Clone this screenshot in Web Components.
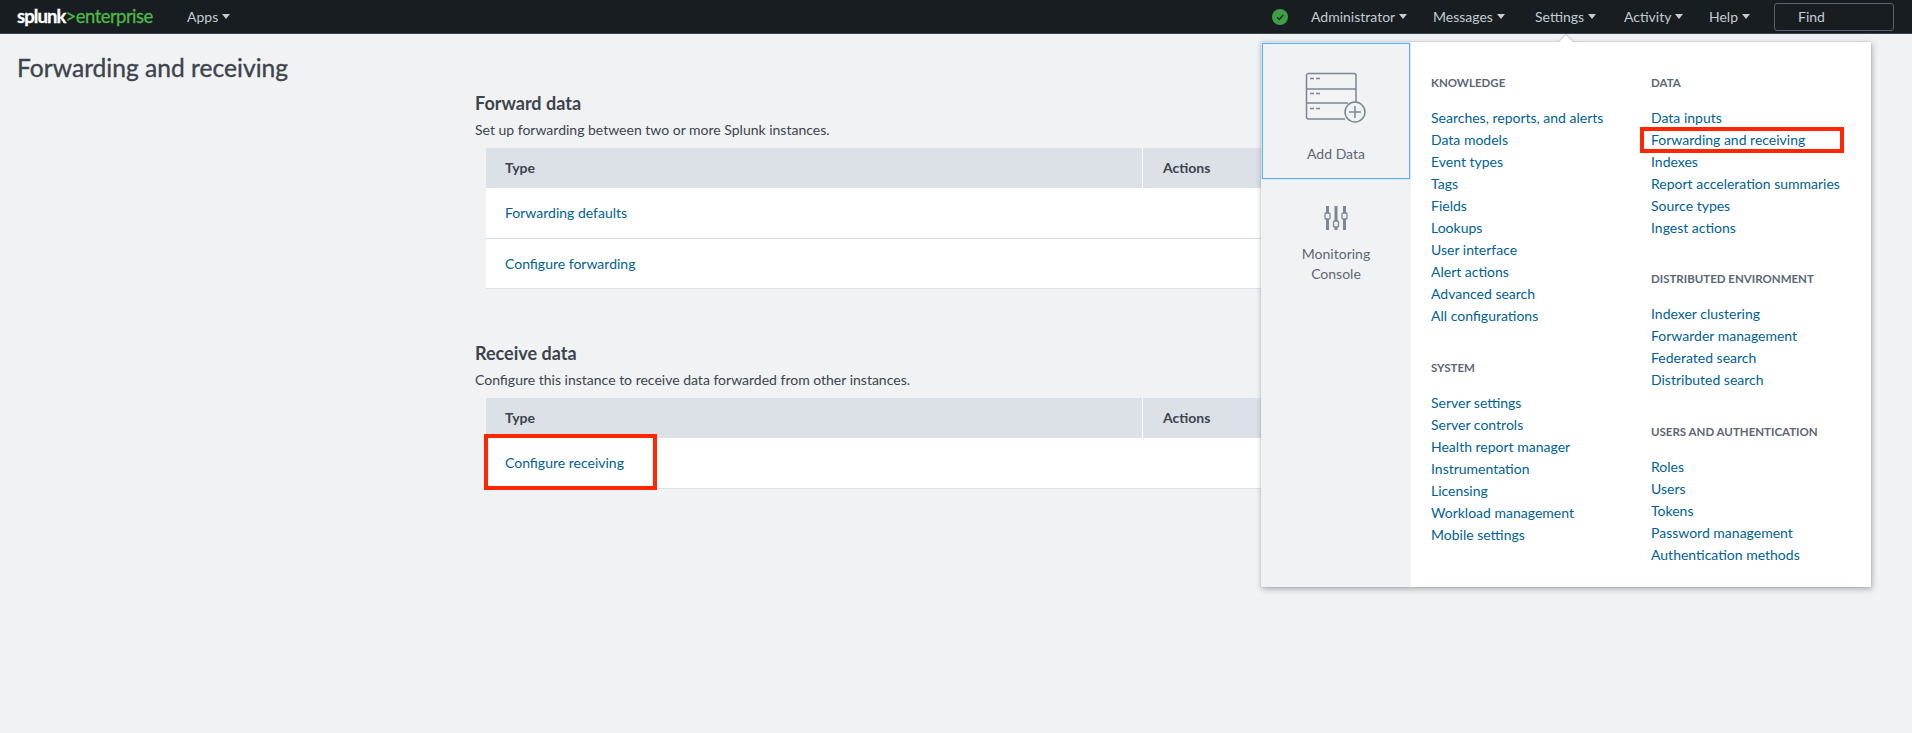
<!DOCTYPE html>
<html><head><meta charset="utf-8"><title>Forwarding and receiving</title>
<style>
html,body{margin:0;padding:0;background:#f1f2f4;height:100%;overflow:hidden}
body{font-family:Lato,"Liberation Sans",sans-serif;color:#3c444d}
</style></head><body>
<splunk-nav>
  <nav-item slot="left" w="60">Apps</nav-item>
  <nav-item w="122">Administrator</nav-item>
  <nav-item w="102">Messages</nav-item>
  <nav-item w="89">Settings</nav-item>
  <nav-item w="85">Activity</nav-item>
  <nav-item w="65">Help</nav-item>
</splunk-nav>
<page-main>
  <span slot="title">Forwarding and receiving</span>
  <data-section heading="Forward data" desc="Set up forwarding between two or more Splunk instances.">
    <table-row>Forwarding defaults</table-row>
    <table-row>Configure forwarding</table-row>
  </data-section>
  <data-section heading="Receive data" desc="Configure this instance to receive data forwarded from other instances.">
    <table-row mark>Configure receiving</table-row>
  </data-section>
</page-main>
<settings-menu>
  <menu-col>
    <menu-group title="KNOWLEDGE">
      <menu-link>Searches, reports, and alerts</menu-link><menu-link>Data models</menu-link><menu-link>Event types</menu-link><menu-link>Tags</menu-link><menu-link>Fields</menu-link><menu-link>Lookups</menu-link><menu-link>User interface</menu-link><menu-link>Alert actions</menu-link><menu-link>Advanced search</menu-link><menu-link>All configurations</menu-link>
    </menu-group>
    <menu-group title="SYSTEM" gap="30">
      <menu-link>Server settings</menu-link><menu-link>Server controls</menu-link><menu-link>Health report manager</menu-link><menu-link>Instrumentation</menu-link><menu-link>Licensing</menu-link><menu-link>Workload management</menu-link><menu-link>Mobile settings</menu-link>
    </menu-group>
  </menu-col>
  <menu-col>
    <menu-group title="DATA">
      <menu-link>Data inputs</menu-link><menu-link mark>Forwarding and receiving</menu-link><menu-link>Indexes</menu-link><menu-link>Report acceleration summaries</menu-link><menu-link>Source types</menu-link><menu-link>Ingest actions</menu-link>
    </menu-group>
    <menu-group title="DISTRIBUTED ENVIRONMENT" gap="29">
      <menu-link>Indexer clustering</menu-link><menu-link>Forwarder management</menu-link><menu-link>Federated search</menu-link><menu-link>Distributed search</menu-link>
    </menu-group>
    <menu-group title="USERS AND AUTHENTICATION" gap="30">
      <menu-link>Roles</menu-link><menu-link>Users</menu-link><menu-link>Tokens</menu-link><menu-link>Password management</menu-link><menu-link>Authentication methods</menu-link>
    </menu-group>
  </menu-col>
</settings-menu>
<script>
function def(name, css, html, init){
  customElements.define(name, class extends HTMLElement{
    constructor(){super();const s=this.attachShadow({mode:'open'});s.innerHTML='<style>'+css+'</style>'+html;}
    connectedCallback(){ if(init) init(this,this.shadowRoot); }
  });
}
const F='font-family:Lato,"Liberation Sans",sans-serif;';
def('splunk-nav',`:host{display:flex;align-items:center;height:33px;background:#171d21;border-bottom:1px solid #3c444d;${F}}
 .logo{margin-left:17px;width:136px;white-space:nowrap;font-size:18.5px;line-height:33px;letter-spacing:-.55px;color:#4fb848;font-weight:400;-webkit-text-stroke:.3px #4fb848}
 .logo b{color:#fff;font-weight:700;letter-spacing:-.9px;-webkit-text-stroke:.3px #fff}
 .left{margin-left:34px;display:flex}
 .right{margin-left:auto;display:flex;align-items:center;padding-right:18px}
 .status{width:16px;height:16px;margin-right:23px;display:block}
 .find{box-sizing:border-box;width:120px;height:28px;border:1px solid #57626d;border-radius:3px;color:#c3cbd4;font-size:14px;line-height:26px;padding-left:23px}`,
 `<span class="logo"><b>splunk</b>&gt;enterprise</span><div class="left"><slot name="left"></slot></div>
 <div class="right"><svg class="status" viewBox="0 0 16 16"><circle cx="8" cy="8" r="8" fill="#3f9e43"/><path d="M5 8.2l2.2 2.2L11.2 6" fill="none" stroke="#12361a" stroke-width="1.4"/></svg><slot></slot><div class="find">Find</div></div>`);
def('nav-item',`:host{display:flex;align-items:center;gap:4px;color:#c3cbd4;font-size:14px;line-height:33px;white-space:nowrap}
 i{display:block;width:0;height:0;border:4px solid transparent;border-top:5px solid #c3cbd4;border-bottom:0}`,
 `<slot></slot><i></i>`,(h)=>{h.style.width=h.getAttribute('w')+'px'});
def('page-main',`:host{display:grid;grid-template-columns:458px 1fr;padding-left:17px;${F}}
 h1{margin:19px 0 0;font-size:24.6px;line-height:30px;font-weight:400;color:#3c444d;-webkit-text-stroke:.35px #3c444d}
 .s{padding-top:58px;display:flex;flex-direction:column;gap:53px}`,
 `<h1><slot name="title"></slot></h1><div class="s"><slot></slot></div>`);
def('data-section',`:host{display:block;${F}}
 h2{margin:0 0 7px;font-size:18px;line-height:22px;font-weight:700;color:#3c444d}
 p{margin:0 0 9px;font-size:14px;line-height:18px;color:#3c444d}
 .t{margin-left:11px;width:900px}
 .h{display:grid;grid-template-columns:656px 1fr;height:40px;background:#dce0e7;font-size:14px;font-weight:700;line-height:40px;color:#3c444d}
 .h span{padding-left:19px}.h span+span{border-left:1px solid #fff;padding-left:20px}`,
 `<h2></h2><p></p><div class="t"><div class="h"><span>Type</span><span>Actions</span></div><slot></slot></div>`,
 (h,s)=>{s.querySelector('h2').textContent=h.getAttribute('heading');s.querySelector('p').textContent=h.getAttribute('desc');});
def('table-row',`:host{display:block;position:relative;box-sizing:border-box;height:50.5px;background:#fff;border-bottom:1px solid #dce0e7;color:#006297;font-size:14px;line-height:49px;padding-left:19px}
 .m{display:none;position:absolute;left:-2px;top:-4px;width:173px;height:56px;box-sizing:border-box;border:4px solid #ff2600}
 :host([mark]) .m{display:block}`,`<slot></slot><div class="m"></div>`);
def('settings-menu',`:host{position:absolute;left:1261px;top:42px;width:610px;height:545px;box-sizing:border-box;display:flex;background:#fff;box-shadow:0 0 1px #8f99a3,1px 2px 6px rgba(60,68,77,.4);${F}}
 .n{position:absolute;left:300px;top:-5px;width:10px;height:10px;background:#fff;transform:rotate(45deg);box-shadow:-1px -1px 1px rgba(60,68,77,.2)}
 .side{width:150px;background:#f1f2f4;flex:none;color:#5c6773;font-size:14px;text-align:center;line-height:20px;position:relative}
 .a{box-sizing:border-box;height:136px;margin:1px 1px 0 1px;border:1px solid #5cb0f0;box-shadow:0 0 1px #5cb0f0;padding-top:28px}
 .a svg{display:block;margin:0 auto 20px}
 .b{padding-top:27px}.b svg{display:block;margin:0 auto 14px}
 .c{display:flex;padding-top:30px;padding-left:20px}`,
 `<div class="n"></div><div class="side">
 <div class="a"><svg width="62" height="52" viewBox="0 0 62 52" fill="none" stroke="#7c8791" stroke-width="1.5"><path d="M3 1.500H49a2 2 0 0 1 2 2V30M1.500 17H51M1.500 31H43M1.500 3.500a2 2 0 0 1 2-2M1.500 3V45a2 2 0 0 0 2 2H40"/><path d="M5 6.500h4M11 6.500h4M5 21.500h4M11 21.500h4M5 36.500h4M11 36.500h4" stroke-width="1.300"/><circle cx="50" cy="40" r="10"/><path d="M50 34v12M44 40h12"/></svg>Add Data</div>
 <div class="b"><svg width="24" height="24" viewBox="0 0 24 24"><g fill="#7c8791"><rect x="2" width="3" height="24"/><rect x="10.500" width="3" height="24"/><rect x="19" width="3" height="24"/></g><g fill="#f1f2f4" stroke="#7c8791" stroke-width="1.300"><rect x="1" y="7" width="5" height="6" rx="1"/><rect x="9.500" y="15" width="5" height="6" rx="1"/><rect x="18" y="7" width="5" height="6" rx="1"/></g></svg>Monitoring<br>Console</div>
 </div><div class="c"><slot></slot></div>`);
def('menu-col',`:host{display:block;width:220px}`,`<slot></slot>`);
def('menu-group',`:host{display:block}
 h3{margin:0 0 13px;font-size:11.500px;line-height:22px;font-weight:700;color:#5c6773;white-space:nowrap}`,
 `<h3></h3><slot></slot>`,(h,s)=>{s.querySelector('h3').textContent=h.getAttribute('title');if(h.getAttribute('gap'))h.style.marginTop=h.getAttribute('gap')+'px';});
def('menu-link',`:host{display:block;position:relative;height:22px;line-height:22px;font-size:14px;color:#006297;white-space:nowrap}
 .m{display:none;position:absolute;left:-11px;top:-2px;width:204px;height:26px;box-sizing:border-box;border:4px solid #ff2600}
 :host([mark]) .m{display:block}`,`<slot></slot><div class="m"></div>`);
</script>
</body></html>
